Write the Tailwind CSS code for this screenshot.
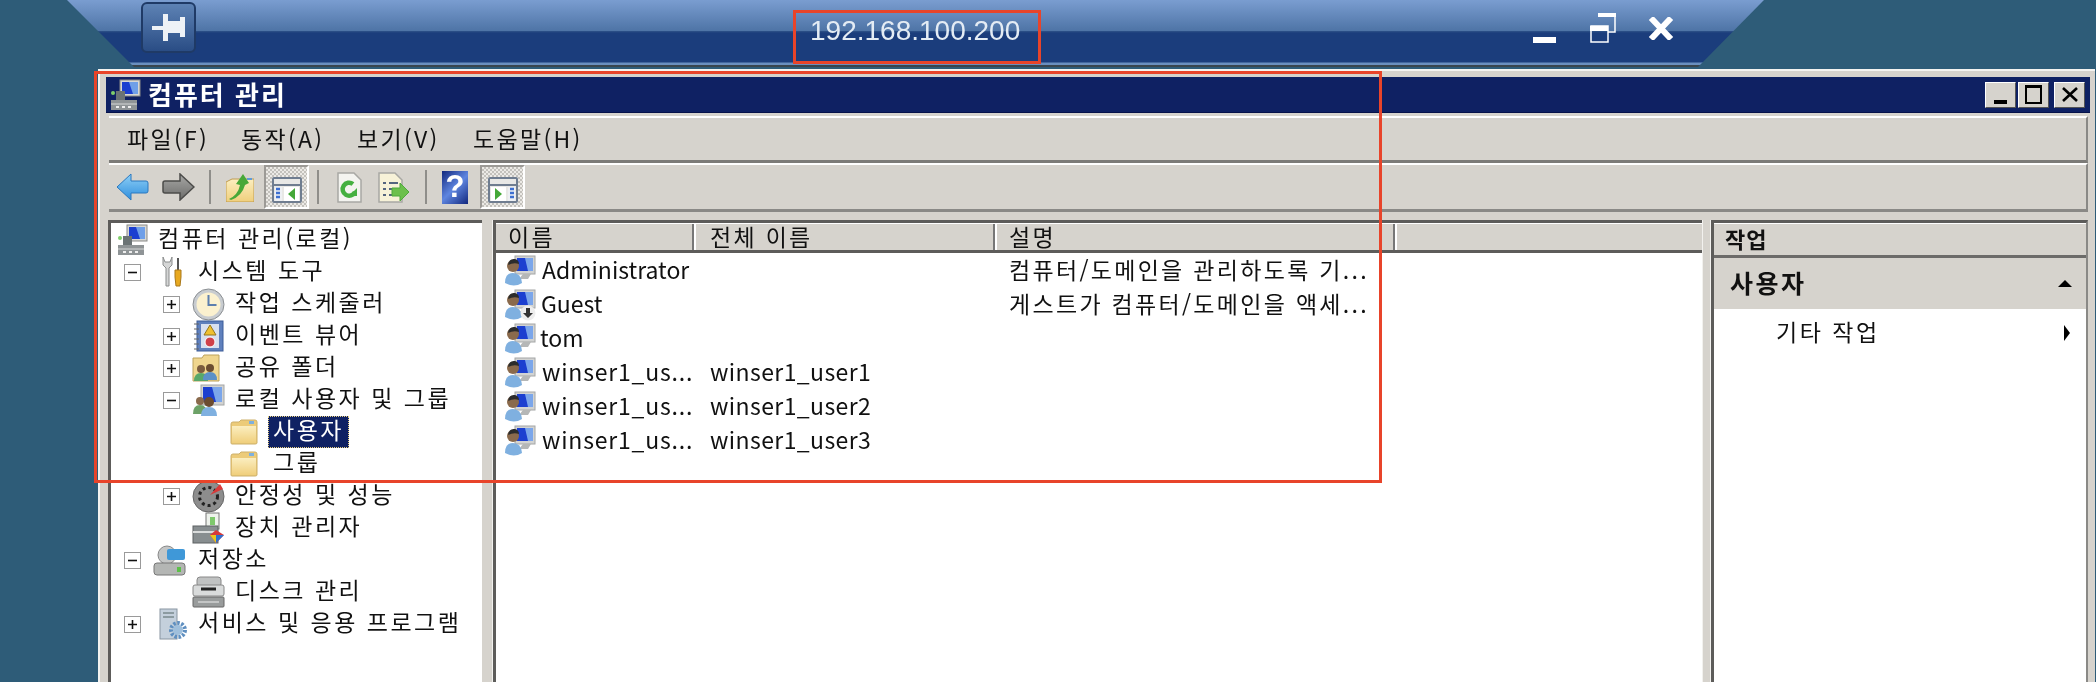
<!DOCTYPE html>
<html lang="ko">
<head>
<meta charset="UTF-8" />
<title>컴퓨터 관리</title>
<script src="https://cdn.jsdelivr.net/npm/@tailwindcss/browser@4"></script>
</head>
<body class="relative w-[2096px] h-[682px] overflow-hidden bg-[#2e5c78] font-['Noto_Sans_CJK_KR','Noto_Sans',sans-serif] text-[23px] text-[#111]">

<!-- 공용 아이콘 -->
<svg class="absolute w-0 h-0">
  <defs>
    <linearGradient id="fold" x1="0" y1="0" x2="0" y2="1"><stop offset="0" stop-color="#fbeec0" /><stop offset="1" stop-color="#f0cf7c" /></linearGradient>
    <linearGradient id="helpbg" x1="0" y1="0" x2="1" y2="1"><stop offset="0" stop-color="#12287e" /><stop offset="0.5" stop-color="#5f86e0" /><stop offset="1" stop-color="#12287e" /></linearGradient>
    <linearGradient id="backbg" x1="0" y1="0" x2="0" y2="1"><stop offset="0" stop-color="#8fd0f6" /><stop offset="1" stop-color="#2f8fde" /></linearGradient>
    <linearGradient id="fwdbg" x1="0" y1="0" x2="0" y2="1"><stop offset="0" stop-color="#a8a8a6" /><stop offset="1" stop-color="#6c6c6a" /></linearGradient>
  </defs>
  <symbol id="pc" viewBox="0 0 32 32">
    <rect x="11" y="1" width="20" height="16" fill="#d8d8d4" stroke="#8a8a88"/>
    <rect x="13" y="3" width="16" height="12" fill="#1c3fd0"/>
    <path d="M20 3h9v12h-5z" fill="#6f9fe8"/>
    <rect x="2" y="21" width="26" height="10" fill="#8f9496"/>
    <path d="M2 25h26" stroke="#d5d7d7"/>
    <path d="M7 28h3m3 0h3m3 0h3" stroke="#eee" stroke-width="2"/>
    <rect x="7" y="12" width="9" height="9" fill="#6b7375"/>
    <circle cx="4" cy="14" r="2" fill="#7fcf6a"/>
  </symbol>
  <symbol id="user" viewBox="0 0 32 32">
    <rect x="11" y="1" width="20" height="18" fill="#d2d3d2" stroke="#a4a6a6"/>
    <rect x="13" y="3" width="16" height="13" fill="#1c3fd0"/>
    <path d="M21 3h8v13h-5z" fill="#7ba6ea"/>
    <path d="M19 19h8l-3 5H15z" fill="#b5b7b7"/>
    <circle cx="9" cy="11" r="6" fill="#8a6a4c"/>
    <path d="M4 10q1-7 7-6 4 1 4 5-5-2-11 1z" fill="#2c2c2c"/>
    <path d="M1 28q0-10 8-10t9 10q-8 5-17 0z" fill="#7fb0e0"/>
  </symbol>
  <symbol id="folder" viewBox="0 0 28 26">
    <path d="M1 5q0-2 2-2h6l2-2h14q2 0 2 2v21q0 1-2 1H2q-1 0-1-1z" fill="#eccb79" stroke="#cdb06a"/>
    <path d="M2 7h24v17H2z" fill="url(#fold)"/>
    <path d="M19 2h5v3h-5z" fill="#7fb0dd"/>
  </symbol>
  <symbol id="plus" viewBox="0 0 17 17">
    <rect x="0.5" y="0.5" width="16" height="16" fill="#fff" stroke="#9a9a9a"/>
    <path d="M4 8.5h9M8.5 4v9" stroke="#111" stroke-width="1.6"/>
  </symbol>
  <symbol id="minus" viewBox="0 0 17 17">
    <rect x="0.5" y="0.5" width="16" height="16" fill="#fff" stroke="#9a9a9a"/>
    <path d="M4 8.5h9" stroke="#111" stroke-width="1.6"/>
  </symbol>
</svg>

<!-- 원격 연결 표시줄 -->
<header class="h-[67px] ml-[67px] w-[1697px] [clip-path:polygon(0_0,100%_0,1631px_100%,67px_100%)] bg-[linear-gradient(#7a9dd0_0,#4e74a6_31px,#2f5389_31px,#1b3d7c_33px,#1b3d7c_62px,#6a8fbf_63px,#6a8fbf_65px,#39454e_65px)] flex items-start blur-[0.5px]">
  <div class="ml-[74px] mt-[2px] w-[55px] h-[51px] rounded-[6px] border-2 border-[#1f3a66] bg-[linear-gradient(#5d82b4,#2a4d85)] flex items-center justify-center">
    <svg width="33" height="27" viewBox="0 0 33 27" fill="#eef2f6"><path d="M0 12h11V0h5v7h12V3h5v20h-5v-4H16v8h-5V16H0z" /></svg>
  </div>
  <div class="ml-[614px] mt-[17px] w-[210px] text-[28px] leading-none text-[#e4ecf4] font-['Liberation_Sans',sans-serif]">192.168.100.200</div>
  <div class="ml-[513px] mt-[37px] w-[23px] h-[6px] bg-white"></div>
  <svg class="ml-[34px] mt-[13px]" width="26" height="30" viewBox="0 0 26 30" fill="none" stroke="#fff" stroke-width="1.5"><path d="M8 3h17v16h-7" /><rect x="8" y="0" width="18" height="4" fill="#fff" stroke="none" /><rect x="1" y="13" width="17" height="16" /><rect x="0" y="13" width="18" height="5" fill="#fff" stroke="none" /></svg>
  <svg class="ml-[32px] mt-[17px]" width="26" height="23" viewBox="0 0 26 23" stroke="#fff" stroke-width="6"><path d="M3 1l20 21M23 1L3 22" /></svg>
</header>

<!-- 컴퓨터 관리 창 -->
<main class="mt-[2px] ml-[98px] w-[1997px] h-[613px] bg-[#d6d3cd] border-t-2 border-l-2 border-[#f4f3f0] pl-[6px] pr-[3px] pt-[6px] flex flex-col blur-[0.5px]">
  <div class="h-[36px] w-[1984px] shrink-0 bg-[#0f2163] border-b border-[#06124a] flex items-center">
    <svg class="ml-[3px] w-[32px] h-[32px]"><use href="#pc" /></svg>
    <span class="ml-[7px] mb-[2px] text-white font-bold text-[26px] leading-none tracking-[2px]">컴퓨터 관리</span>
    <div class="ml-auto mr-[5px] flex gap-[2px]">
      <div class="w-[31px] h-[26px] bg-[#d6d3cd] border border-t-white border-l-white border-r-[#555] border-b-[#555] flex items-end justify-center pb-[3px]"><div class="w-[13px] h-[4px] bg-black"></div></div>
      <div class="w-[31px] h-[26px] bg-[#d6d3cd] border border-t-white border-l-white border-r-[#555] border-b-[#555] flex items-center justify-center"><div class="w-[17px] h-[19px] border-2 border-t-[3px] border-black"></div></div>
      <div class="w-[31px] h-[26px] ml-[3px] bg-[#d6d3cd] border border-t-white border-l-white border-r-[#555] border-b-[#555] flex items-center justify-center"><svg width="16" height="15" viewBox="0 0 16 15" stroke="#000" stroke-width="2.6"><path d="M1 1l14 13M15 1L1 14" /></svg></div>
    </div>
  </div>

  <nav class="mt-[3px] ml-[3px] h-[47px] w-[1979px] shrink-0 border-t-2 border-t-white border-b-[3px] border-b-[#7c7b78] border-r-2 border-r-[#8a8986] flex items-center pl-[18px] tracking-[2.3px]">
    <span class="w-[114px] mb-[2px]">파일(F)</span>
    <span class="w-[116px] mb-[2px]">동작(A)</span>
    <span class="w-[116px] mb-[2px]">보기(V)</span>
    <span class="mb-[2px]">도움말(H)</span>
  </nav>

  <div class="ml-[3px] h-[49px] w-[1979px] shrink-0 border-t-2 border-t-white border-b-[3px] border-b-[#8a8986] border-r-2 border-r-[#8a8986] flex items-center pl-[7px]">
    <svg width="33" height="28" viewBox="0 0 33 28"><path d="M1 14L15 1v7h15q2 0 2 2v8q0 2-2 2H15v7z" fill="url(#backbg)" stroke="#2a78c0" /></svg>
    <svg class="ml-[13px]" width="33" height="28" viewBox="0 0 33 28"><path d="M32 14L18 1v7H3q-2 0-2 2v8q0 2 2 2h15v7z" fill="url(#fwdbg)" stroke="#4c4c4a" stroke-width="1.500" /></svg>
    <div class="ml-[14px] w-[2px] h-[34px] bg-[#8f8e8a]"></div>
    <svg class="ml-[15px]" width="28" height="29" viewBox="0 0 28 29"><path d="M0 9l6-3h22v23H0z" fill="url(#fold)" stroke="#c09c50" /><path d="M3 26q9-4 11-14l-4-1 7-10 6 9-4 2q-3 11-14 15z" fill="#48a838" /><path d="M21 5h5v2h-5z" fill="#5f9bd8" /></svg>
    <div class="ml-[10px] w-[45px] h-[44px] shrink-0 border-t-2 border-l-2 border-[#9c9a96] border-r-2 border-b-2 border-r-white border-b-white bg-[repeating-conic-gradient(#c3c1bc_0_25%,#eceae6_0_50%)] bg-[length:4px_4px] flex items-end justify-center pb-[4px]">
      <svg width="30" height="26" viewBox="0 0 30 26"><rect x="1" y="1" width="28" height="24" rx="1" fill="#e8e8e6" stroke="#6f7d90" stroke-width="2" /><path d="M2 8h26" stroke="#6f7d90" stroke-width="2" /><rect x="3" y="10" width="7" height="14" fill="#eef0f4" /><rect x="12" y="10" width="15" height="14" fill="#fff" /><path d="M4 12h4M4 16h4M4 20h4" stroke="#3d6fd0" stroke-width="2.500" /><path d="M23 11v12l-7-6z" fill="#44a838" /></svg>
    </div>
    <div class="ml-[8px] w-[2px] h-[34px] bg-[#8f8e8a]"></div>
    <svg class="ml-[18px]" width="25" height="31" viewBox="0 0 25 31"><path d="M1 1h16l7 7v22H1z" fill="#f4f4f0" stroke="#a8a8a4" stroke-width="1.500" /><path d="M18 20a6.500 6.500 0 1 1-2-8" fill="none" stroke="#45b040" stroke-width="4.500" /><path d="M20 24h-8l8-8z" fill="#45b040" /></svg>
    <svg class="ml-[16px]" width="32" height="31" viewBox="0 0 32 31"><path d="M1 1h16l7 7v22H1z" fill="#f7f2d8" stroke="#a8a8a4" stroke-width="1.500" /><path d="M5 11h3M11 11h9M5 17h3M11 17h6M5 23h3M11 23h6" stroke="#55657f" stroke-width="2" /><path d="M14 16h8v-5l9 9-9 9v-5h-8z" fill="#6cc04c" stroke="#4faa3c" /></svg>
    <div class="ml-[15px] w-[2px] h-[34px] bg-[#8f8e8a]"></div>
    <div class="ml-[15px] w-[26px] h-[33px] shrink-0 bg-[linear-gradient(135deg,#12287e,#5f86e0_50%,#12287e)] text-white text-[31px] leading-[32px] text-center font-bold font-['Liberation_Sans',sans-serif]">?</div>
    <div class="ml-[12px] w-[45px] h-[44px] shrink-0 border-t-2 border-l-2 border-[#9c9a96] border-r-2 border-b-2 border-r-white border-b-white bg-[repeating-conic-gradient(#c3c1bc_0_25%,#eceae6_0_50%)] bg-[length:4px_4px] flex items-end justify-center pb-[4px]">
      <svg width="30" height="26" viewBox="0 0 30 26"><rect x="1" y="1" width="28" height="24" rx="1" fill="#e8e8e6" stroke="#6f7d90" stroke-width="2" /><path d="M2 8h26" stroke="#6f7d90" stroke-width="2" /><rect x="20" y="10" width="7" height="14" fill="#eef0f4" /><rect x="3" y="10" width="15" height="14" fill="#fff" /><path d="M22 12h4M22 16h4M22 20h4" stroke="#3d6fd0" stroke-width="2.500" /><path d="M7 11v12l7-6z" fill="#44a838" /></svg>
    </div>
  </div>

  <section class="mt-[8px] ml-[2px] flex flex-1 min-h-0 w-[1980px]">
    <!-- 트리 -->
    <div class="w-[374px] shrink-0 bg-white border-t-[3px] border-l-[3px] border-[#5d5c5a] pl-[5px] pt-[1px] tracking-[2.5px]">
      <ul class="flex flex-col">
        <li class="h-[32px] flex items-center"><svg class="w-[32px] h-[32px]"><use href="#pc" /></svg><span class="ml-[10px] mb-[5px]">컴퓨터 관리(로컬)</span></li>
        <li class="h-[32px] flex items-center pl-[8px]"><svg class="w-[17px] h-[17px]"><use href="#minus" /></svg><svg class="ml-[17px]" width="26" height="32" viewBox="0 0 26 32"><path d="M5 1v8l3 3v18h3V12l3-3V1l-2 5h-5z" fill="#d5d6d6" stroke="#8b8d8d" /><path d="M20 2v12" stroke="#555" stroke-width="2" /><path d="M17 14h6v7l-1 9h-4l-1-9z" fill="#e8a920" stroke="#a9781a" /></svg><span class="ml-[14px] mb-[5px]">시스템 도구</span></li>
        <li class="h-[32px] flex items-center pl-[47px]"><svg class="w-[17px] h-[17px]"><use href="#plus" /></svg><svg class="ml-[12px]" width="33" height="33" viewBox="0 0 33 33"><circle cx="16.500" cy="16.500" r="15.500" fill="#c8ccd0" stroke="#8a8e92" /><circle cx="16.500" cy="16.500" r="12" fill="#fbf1cf" /><path d="M16.500 7v10h8" fill="none" stroke="#5d7fae" stroke-width="2" /></svg><span class="ml-[10px] mb-[5px]">작업 스케줄러</span></li>
        <li class="h-[32px] flex items-center pl-[47px]"><svg class="w-[17px] h-[17px]"><use href="#plus" /></svg><svg class="ml-[12px]" width="33" height="32" viewBox="0 0 33 32"><rect x="5" y="1" width="26" height="30" fill="#5f80bd" stroke="#3c5c98" /><rect x="9" y="4" width="18" height="24" fill="#d8e0f0" /><path d="M18 5l6 10H12z" fill="#f0c030" stroke="#96761e" /><circle cx="18" cy="22" r="5" fill="#d0404a" stroke="#fff" /><path d="M2 4h5M2 9h5M2 14h5M2 19h5M2 24h5M2 29h5" stroke="#666" /></svg><span class="ml-[10px] mb-[5px]">이벤트 뷰어</span></li>
        <li class="h-[32px] flex items-center pl-[47px]"><svg class="w-[17px] h-[17px]"><use href="#plus" /></svg><svg class="ml-[12px]" width="29" height="29" viewBox="0 0 29 29"><path d="M1 4h9l2-3h15v26H1z" fill="#f0d68e" stroke="#bca25c" /><circle cx="9" cy="15" r="4" fill="#7b5c3e" /><circle cx="18" cy="14" r="4" fill="#6b4c30" /><path d="M2 27q0-8 7-8t7 8z" fill="#58a868" /><path d="M11 26q0-8 7-8t7 8z" fill="#5c90c8" /></svg><span class="ml-[14px] mb-[5px]">공유 폴더</span></li>
        <li class="h-[32px] flex items-center pl-[47px]"><svg class="w-[17px] h-[17px]"><use href="#minus" /></svg><svg class="ml-[12px]" width="33" height="32" viewBox="0 0 33 32"><rect x="9" y="1" width="23" height="20" fill="#d2d3d2" stroke="#a4a6a6" /><rect x="11" y="3" width="19" height="15" fill="#1c3fd0" /><path d="M20 3h10v15h-6z" fill="#7ba6ea" /><circle cx="8" cy="17" r="4" fill="#8a6a4c" /><path d="M1 30q0-9 7-9t7 9z" fill="#6da268" /><circle cx="17" cy="18" r="5" fill="#6b4c30" /><path d="M9 32q0-9 8-9t8 9z" fill="#7fb0e0" /></svg><span class="ml-[10px] mb-[5px]">로컬 사용자 및 그룹</span></li>
        <li class="h-[32px] flex items-center pl-[114px]"><svg class="w-[28px] h-[26px]"><use href="#folder" /></svg><span class="ml-[10px] px-[4px] h-[32px] leading-[24px] bg-[#0f2163] text-white border border-dotted border-[#e8d080]">사용자</span></li>
        <li class="h-[32px] flex items-center pl-[114px]"><svg class="w-[28px] h-[26px]"><use href="#folder" /></svg><span class="ml-[15px] mb-[5px]">그룹</span></li>
        <li class="h-[32px] flex items-center pl-[47px]"><svg class="w-[17px] h-[17px]"><use href="#plus" /></svg><svg class="ml-[12px]" width="33" height="33" viewBox="0 0 33 33"><circle cx="16.500" cy="16.500" r="15.500" fill="#8d8d8d" stroke="#666" /><circle cx="16.500" cy="16.500" r="9" fill="none" stroke="#222" stroke-width="3" stroke-dasharray="3 3" /><path d="M18 15l10-11 3 5z" fill="#d83a3a" /></svg><span class="ml-[10px] mb-[5px]">안정성 및 성능</span></li>
        <li class="h-[32px] flex items-center pl-[76px]"><svg width="33" height="32" viewBox="0 0 33 32"><rect x="14" y="1" width="13" height="16" fill="#eef2ec" stroke="#777" /><path d="M18 5h5v8h-5z" fill="#7ec86c" /><rect x="1" y="14" width="25" height="17" fill="#888e90" stroke="#5c6062" /><path d="M1 20h25" stroke="#dadcdc" stroke-width="2" /><path d="M24 18l8 5-8 8-6-8z" fill="#d83a3a" /><path d="M24 23h8l-8 8z" fill="#2f72d0" /><path d="M18 23h6v8z" fill="#e8c820" /></svg><span class="ml-[10px] mb-[5px]">장치 관리자</span></li>
        <li class="h-[32px] flex items-center pl-[8px]"><svg class="w-[17px] h-[17px]"><use href="#minus" /></svg><svg class="ml-[12px]" width="33" height="32" viewBox="0 0 33 32"><circle cx="14" cy="11" r="9" fill="#c4c6c6" stroke="#888" /><rect x="14" y="5" width="18" height="11" rx="2" fill="#3f98d8" /><rect x="1" y="19" width="31" height="12" rx="3" fill="#b4b6b4" stroke="#777" /><rect x="24" y="23" width="4" height="5" fill="#5cc048" /></svg><span class="ml-[12px] mb-[5px]">저장소</span></li>
        <li class="h-[32px] flex items-center pl-[76px]"><svg width="33" height="32" viewBox="0 0 33 32"><rect x="5" y="1" width="24" height="10" rx="3" fill="#c0c2c2" stroke="#888" /><rect x="1" y="9" width="31" height="11" rx="2" fill="#d9dbdb" stroke="#888" /><path d="M9 13h15" stroke="#222" stroke-width="3" /><rect x="1" y="21" width="31" height="10" rx="1" fill="#999c9c" stroke="#666" /><path d="M6 26h21" stroke="#eee" /></svg><span class="ml-[10px] mb-[5px]">디스크 관리</span></li>
        <li class="h-[32px] flex items-center pl-[8px]"><svg class="w-[17px] h-[17px]"><use href="#plus" /></svg><svg class="ml-[17px]" width="30" height="32" viewBox="0 0 30 32"><rect x="2" y="1" width="17" height="30" fill="#c4d0dc" stroke="#8996a2" /><path d="M5 5h11M5 9h11" stroke="#566" /><circle cx="20" cy="22" r="7" fill="none" stroke="#5f8fc0" stroke-width="4" stroke-dasharray="2.500 1.500" /><circle cx="20" cy="22" r="5" fill="#9fbfdc" /></svg><span class="ml-[10px] mb-[5px]">서비스 및 응용 프로그램</span></li>
      </ul>
    </div>
    <div class="w-[11px] shrink-0 bg-[#d6d3cd] border-r border-[#f2f1ee]"></div>

    <!-- 목록 -->
    <div class="w-[1209px] shrink-0 bg-white border-t-[3px] border-l-[3px] border-[#5d5c5a]">
      <div class="h-[30px] flex bg-[#d6d3cd] border-b-[3px] border-[#5d5c5a] border-t border-t-white leading-[25px] tracking-[2.3px]">
        <div class="w-[198px] pl-[12px] border-r-2 border-[#777]">이름</div>
        <div class="w-[301px] pl-[14px] border-l-2 border-l-white border-r-2 border-[#777]">전체 이름</div>
        <div class="w-[400px] pl-[12px] border-l-2 border-l-white border-r-2 border-[#777]">설명</div>
        <div class="flex-1 border-l-2 border-l-white"></div>
      </div>
      <div class="pt-[1px] grid grid-cols-[198px_315px_1fr] auto-rows-[34px] items-center">
        <div class="flex items-center pl-[8px]"><svg class="w-[32px] h-[32px] shrink-0"><use href="#user" /></svg><span class="ml-[6px] mb-[4px]">Administrator</span></div><div></div><div class="pb-[4px] tracking-[2.3px]">컴퓨터/도메인을 관리하도록 기...</div>
        <div class="flex items-center pl-[8px]"><span class="relative w-[32px] h-[32px] shrink-0"><svg class="w-[32px] h-[32px]"><use href="#user" /></svg><svg class="absolute right-0 bottom-0" width="16" height="16" viewBox="0 0 16 16"><circle cx="8" cy="8" r="7.500" fill="#eee" /><path d="M6 3h4v5h3l-5 5-5-5h3z" fill="#333" /></svg></span><span class="ml-[5px] mb-[4px]">Guest</span></div><div></div><div class="pb-[4px] tracking-[2.3px]">게스트가 컴퓨터/도메인을 액세...</div>
        <div class="flex items-center pl-[8px]"><svg class="w-[32px] h-[32px] shrink-0"><use href="#user" /></svg><span class="ml-[4px] mb-[4px]">tom</span></div><div></div><div></div>
        <div class="flex items-center pl-[8px]"><svg class="w-[32px] h-[32px] shrink-0"><use href="#user" /></svg><span class="ml-[6px] mb-[4px] tracking-[0.8px]">winser1_us...</span></div><div class="pl-[16px] pb-[4px] tracking-[0.4px]">winser1_user1</div><div></div>
        <div class="flex items-center pl-[8px]"><svg class="w-[32px] h-[32px] shrink-0"><use href="#user" /></svg><span class="ml-[6px] mb-[4px] tracking-[0.8px]">winser1_us...</span></div><div class="pl-[16px] pb-[4px] tracking-[0.4px]">winser1_user2</div><div></div>
        <div class="flex items-center pl-[8px]"><svg class="w-[32px] h-[32px] shrink-0"><use href="#user" /></svg><span class="ml-[6px] mb-[4px] tracking-[0.8px]">winser1_us...</span></div><div class="pl-[16px] pb-[4px] tracking-[0.4px]">winser1_user3</div><div></div>
      </div>
    </div>
    <div class="w-[9px] shrink-0 bg-[#d6d3cd] border-x border-[#f2f1ee]"></div>

    <!-- 작업 창 -->
    <div class="w-[377px] shrink-0 bg-white border-t-[3px] border-l-[3px] border-[#5d5c5a] border-r-2 border-r-[#8a8986]">
      <div class="h-[35px] bg-[#d6d3cd] border-t border-t-white border-b-[3px] border-b-[#6c6b69] pl-[11px] font-bold text-[22px] leading-[28px] tracking-[1px]">작업</div>
      <div class="h-[51px] bg-[#d6d3cd] flex items-center pl-[16px] pr-[14px] font-bold text-[25px] tracking-[2.5px]"><span class="mb-[2px]">사용자</span><span class="ml-auto w-0 h-0 border-x-[7px] border-x-transparent border-b-[7px] border-b-black"></span></div>
      <div class="h-[48px] flex items-center pl-[62px] pr-[16px] tracking-[2.5px]"><span class="mb-[3px]">기타 작업</span><span class="ml-auto w-0 h-0 border-y-[8px] border-y-transparent border-l-[6px] border-l-black"></span></div>
    </div>
  </section>
</main>

<!-- 빨간 표시 -->
<div class="absolute left-[793px] top-[10px] w-[248px] h-[54px] border-[3px] border-[#e8442a]"></div>
<div class="absolute left-[94px] top-[71px] w-[1288px] h-[412px] border-[3px] border-[#e8442a]"></div>
</body>
</html>
